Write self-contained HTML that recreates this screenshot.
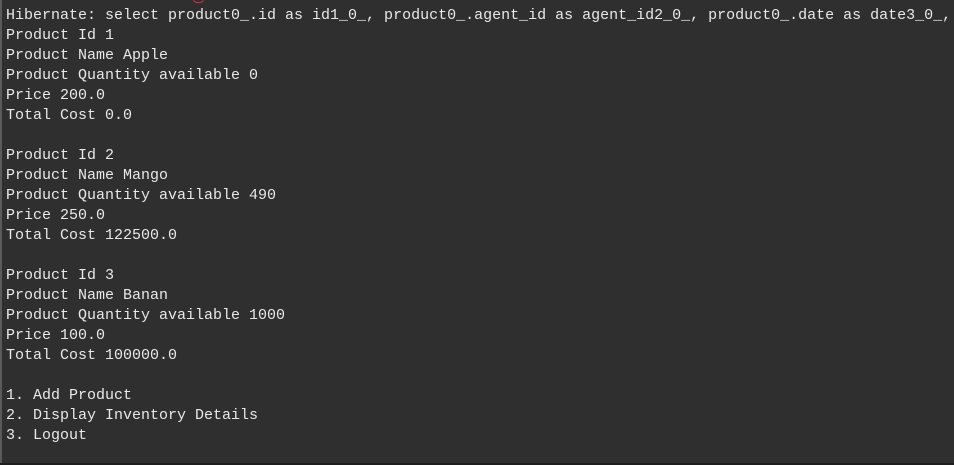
<!DOCTYPE html>
<html><head><meta charset="utf-8"><style>
html,body{margin:0;padding:0;}
body{width:954px;height:465px;background:#2f2f2f;overflow:hidden;position:relative;}
.strip{position:absolute;left:0;top:0;width:2px;height:465px;background:#5a5a5a;}
.bot{position:absolute;left:0;bottom:0;width:954px;height:2px;background:#1e1e1e;}
pre{margin:0;position:absolute;left:6px;top:6px;font-family:"Liberation Mono",monospace;font-size:15px;line-height:20px;color:#e8e8e8;white-space:pre;}
.red{position:absolute;left:193px;top:-3px;width:9px;height:5px;border:1px solid #d0304a;border-top:none;border-radius:0 0 4px 4px;}
</style></head><body>
<div class="strip"></div>
<div class="red"></div>
<pre>Hibernate: select product0_.id as id1_0_, product0_.agent_id as agent_id2_0_, product0_.date as date3_0_,
Product Id 1
Product Name Apple
Product Quantity available 0
Price 200.0
Total Cost 0.0

Product Id 2
Product Name Mango
Product Quantity available 490
Price 250.0
Total Cost 122500.0

Product Id 3
Product Name Banan
Product Quantity available 1000
Price 100.0
Total Cost 100000.0

1. Add Product
2. Display Inventory Details
3. Logout</pre>
<div class="bot"></div>
</body></html>
